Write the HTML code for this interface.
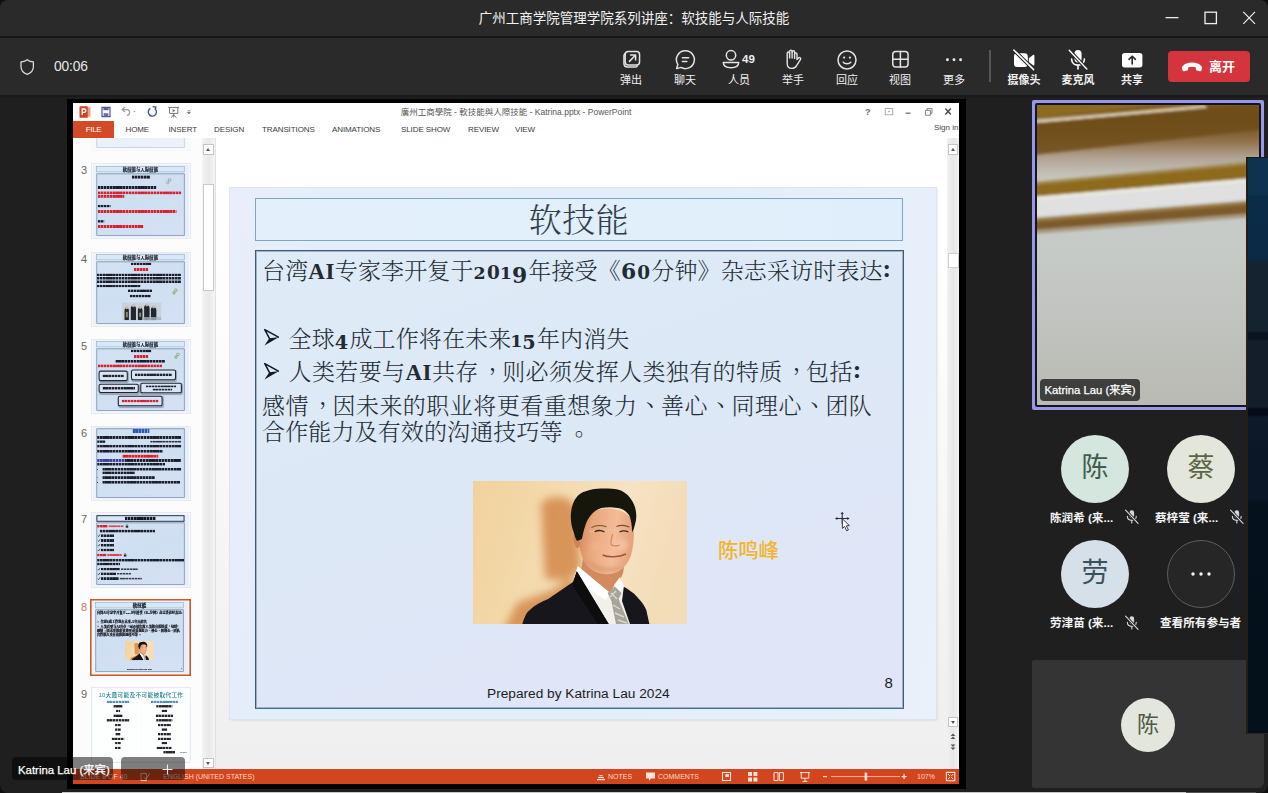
<!DOCTYPE html>
<html lang="zh-CN">
<head>
<meta charset="utf-8">
<title>广州工商学院管理学院系列讲座：软技能与人际技能</title>
<style>
*{box-sizing:border-box;margin:0;padding:0}
html{width:1268px;height:793px;overflow:hidden;background:#0e0e0e}
body{width:1268px;height:793px;overflow:hidden;background:#1f1f1f;border-radius:8px}
body{position:relative;font-family:"Liberation Sans","Noto Sans CJK SC",sans-serif;color:#fff}
.abs{position:absolute}
/* ---------- Teams chrome ---------- */
#titlebar{left:0;top:0;width:1268px;height:36px;background:#2a2a2a}
#titlebar .t{left:0;top:0;width:1268px;height:36px;line-height:37px;text-align:center;font-size:13.5px;color:#f2f2f2}
#sep1{left:0;top:36px;width:1268px;height:2px;background:#171717}
#toolbar{left:0;top:38px;width:1268px;height:57px;background:#2a2a2a}
#toolbar-shadow{left:0;top:95px;width:1268px;height:4px;background:linear-gradient(#181818,#1f1f1f)}
.timer{left:54px;top:58.7px;font-size:13.8px;letter-spacing:-0.15px;color:#e6e6e6;line-height:16px}
.tb{position:absolute;top:38px;width:54px;height:57px;text-align:center}
.tb svg{position:absolute;left:50%;top:10px;margin-left:-12px;width:24px;height:24px;overflow:visible}
.tb .l{position:absolute;left:-10px;right:-10px;top:35px;font-size:11px;line-height:14px;color:#f0f0f0}
.tb.b .l{font-weight:700}
#leave{left:1168px;top:51px;width:82px;height:31px;background:#d4343b;border-radius:4px}
#leave .l{left:41px;top:0;line-height:31px;font-size:13px;font-weight:700;color:#fff}
/* ---------- PowerPoint window ---------- */
#pptframe{left:67px;top:99px;width:899px;height:690px;background:#000}
#ppt{left:73px;top:103px;width:886px;height:681px;background:#fff;overflow:hidden;color:#444}

/* ppt chrome (coordinates relative to #ppt at 73,103) */
#ppt .qat{left:0;top:0;width:886px;height:18px}
#ppt .ptitle{left:0;top:3px;width:886px;text-align:center;font-size:8.5px;line-height:12px;color:#555;letter-spacing:0;white-space:nowrap;font-family:"Liberation Sans","Noto Sans CJK TC",sans-serif}
#ppt .tabs{left:0;top:18px;width:886px;height:17px;font-size:8px;line-height:17px;color:#444;white-space:nowrap}
#ppt .tabs span{position:absolute;top:0;letter-spacing:-0.1px;color:#3a3a3a}
#ppt .file{left:0;top:18px;width:41px;height:17px;background:#d54a26;color:#fff;text-align:center;font-size:8px;line-height:17px;letter-spacing:-0.4px}
#ppt .signin{left:861px;top:19px;font-size:8px;line-height:12px;color:#444;white-space:nowrap}
#thumbs{left:0;top:35px;width:129px;height:632px;background:#fcfcfc;overflow:hidden}
#thumbs .n{position:absolute;left:8px;font-size:11px;line-height:12px;color:#666}
#tscroll{left:129px;top:35px;width:13px;height:632px;background:linear-gradient(90deg,#f3f3f3,#e9e9e9 50%,#f3f3f3)}
#edit{left:143px;top:35px;width:731px;height:632px;background:linear-gradient(#ffffff 0%,#fdfdfd 30%,#f3f3f3 75%,#efefef 100%)}
#rscroll{left:874px;top:35px;width:12px;height:632px;background:linear-gradient(90deg,#f1f1f1,#e7e7e7 50%,#f1f1f1)}
.sbtn{position:absolute;background:#fff;border:1px solid #c6c6c6}
.sbtn:after{content:"";position:absolute;left:50%;top:50%;margin:-1.5px 0 0 -2.5px;border:2.5px solid transparent;border-top:none;border-bottom:3px solid #555}
.sbtn.d:after{border-bottom:none;border-top:3px solid #555}
#status{left:0;top:666px;width:886px;height:15px;background:#d2461f;color:#ffd9c8;font-size:7px;line-height:15px;white-space:nowrap}
#status span{position:absolute;top:0}

/* slide (706x531 design space) */
.sl{position:absolute;width:706px;height:531px;background:linear-gradient(100deg,#e9eefa 0%,#e3eefa 14%,#e2eefa 60%,#e8f0fa 94%,#ebf1fb 100%);font-family:"Liberation Serif","Noto Serif CJK SC",serif;color:#222b33;overflow:hidden}
.sl .tbox{position:absolute;left:25px;top:10px;width:648px;height:43px;border:1px solid #7da6c4;background:linear-gradient(90deg,#e3f0fb,#dfeefa);text-align:center;font-size:33px;line-height:45px;color:#333d4b;letter-spacing:0.5px;font-weight:300}
.sl .cbox{position:absolute;left:25px;top:62px;width:649px;height:459px;border:1px solid #3f5a73;box-shadow:0 0 0 1px rgba(63,90,115,.38) inset;border-bottom-color:#3d6f8f;background:linear-gradient(160deg,#dfebf7 0%,#dde8f6 45%,#e0e5f8 100%)}
.sl .ln{position:absolute;margin:1px 0 0 1px;left:5px;white-space:nowrap;font-size:23px;line-height:28px;letter-spacing:0.13px;font-weight:300}
.sl .ln b{font-weight:700}
.sl .bu{display:inline-block;width:26.5px;vertical-align:top;height:28px}
.sl .bu svg{width:15px;height:17px;margin:3.6px 0 0 2.2px;display:block}
.sl .ln b{letter-spacing:0.5px}
.sl .ln b.d{font-family:"DejaVu Serif","Liberation Serif",serif;letter-spacing:1.2px;font-weight:700}
.sl .d .x{font-size:0.76em}
.sl .d .x0{font-size:0.8em}
.sl .d .x1{font-size:0.76em;margin:0 -1.2px}
.sl .d .y{font-size:0.84em;position:relative;top:0.11em}
.sl .d .y9{font-size:0.95em;position:relative;top:0.2em}
.sl .d .z{font-size:0.95em}
.sl .pc{display:inline-block;position:relative;left:0.44em;top:-0.45em}
.sl .pc.p2{left:0.37em;top:-0.35em}
.sl .pc.p3{left:0.52em;top:-0.22em}
.sl .co{font-family:"Liberation Serif",serif;font-weight:700;letter-spacing:2px;font-size:1.12em;position:relative;top:-2.2px;line-height:1px}
.sl .nm{position:absolute;left:488px;top:350px;font-family:"Liberation Sans","Noto Sans CJK SC",sans-serif;font-size:20.5px;line-height:26px;color:#f2b52c;font-weight:500;letter-spacing:-0.3px}
.sl .ft{position:absolute;left:257px;top:497px;font-family:"Liberation Sans",sans-serif;font-size:13.7px;line-height:18px;color:#1c1c1c;white-space:nowrap}
.sl .pg{position:absolute;left:654.5px;top:486px;font-family:"Liberation Sans",sans-serif;font-size:15px;line-height:18px;color:#1c1c1c}
.sl .ph{position:absolute;left:243px;top:293px;width:214px;height:143px}

/* right panel */
#vtile{left:1032px;top:100px;width:232px;height:310px;background:#9997e8;border-radius:2px}
#vtile .in{position:absolute;left:3px;top:3px;right:3px;bottom:3px;background:#15151f;border-radius:2px}
#vtile svg{position:absolute;left:5px;top:5px;width:222px;height:300px}
.nlabel{-webkit-text-stroke:0.25px #fff;position:absolute;background:rgba(44,44,44,.88);border-radius:4px;color:#fff;font-size:12px;line-height:22px;text-align:center;white-space:nowrap}
.av{position:absolute;width:68px;height:68px;border-radius:50%;text-align:center;font-size:27px;line-height:66px;font-weight:400}
.pl{position:absolute;font-size:11.6px;font-weight:700;line-height:14px;color:#f4f4f4;white-space:nowrap}
.pm{position:absolute;width:15.6px;height:15.6px;overflow:visible;margin:-1px 0 0 -1px}
#btile{left:1032px;top:660px;width:232px;height:128px;background:#343434;border-radius:2px 2px 6px 2px}
#navy{left:1246px;top:157px;width:22px;height:577px;background:linear-gradient(#0e3350 0,#0e3350 36px,#0b2c48 38px,#0a2a46 100px,#15222f 108px,#15222f 173px,#0a1420 175px,#0a1420 181px,#141d2a 183px,#141d2a 249px,#060d18 251px,#060d18 257px,#0e1a2a 259px,#0b1726 300px,#0b1726 340px,#05111c 346px,#04101a 100%);border-left:2px solid #231f17;border-top:1.5px solid #1a1814;border-bottom:1.5px solid #2a261c}

/* thumbnails */
#thumbs .th{position:absolute;left:18px;width:99.5px;height:75.6px;background:#f6f9fd;box-shadow:0 0 0 1px #e6eaef inset}
#thumbs .th.sel{left:17.2px;width:100.6px;height:77px;margin-top:-0.6px;background:#fbf3ee;box-shadow:0 0 0 1.6px #c45a2e inset}
#thumbs .th .sl{left:1.7px;top:1.5px;transform:scale(0.136);transform-origin:0 0}
#thumbs .th.sel .sl{left:2.3px;top:2.2px}
#thumbs .sl i{position:absolute;display:block}
#thumbs .sl i.b{-webkit-mask-image:repeating-linear-gradient(90deg,#000 0,#000 16px,rgba(0,0,0,.45) 18px,rgba(0,0,0,.45) 21px,#000 23px);mask-image:repeating-linear-gradient(90deg,#000 0,#000 16px,rgba(0,0,0,.45) 18px,rgba(0,0,0,.45) 21px,#000 23px)}
#thumbs .sl{background:linear-gradient(100deg,#eef3fb,#e6f0fa 40%,#e9eefb)}
#thumbs .sl .cbox{background:linear-gradient(160deg,#d2e2f3 0%,#cfdff2 50%,#d6e0f4 100%);border-color:#6c88a6;border-width:5px}
#thumbs .sl .tbox{background:#d9e8f7;border-width:4px;border-color:#8aa9c4}
#thumbs .th.t2w:after{content:"";position:absolute;left:0;top:0;right:0;bottom:0;background:rgba(255,255,255,.55)}
#thumbs .sl .tt{position:absolute;white-space:nowrap}
#thumbs .n.sel{color:#c47a5e}
#thumbs .sl .ln,#thumbs .sl .tbox{font-weight:900;-webkit-text-stroke:1.6px #1a1d26;color:#1a1d26}
#thumbs .sl .ft{-webkit-text-stroke:1px #333}
</style>
</head>
<body>
<!-- Teams title bar -->
<div id="titlebar" class="abs"><div class="t abs">广州工商学院管理学院系列讲座：软技能与人际技能</div></div>
<div id="sep1" class="abs"></div>
<div id="toolbar" class="abs"></div>
<div id="toolbar-shadow" class="abs"></div>
<div class="timer abs">00:06</div>


<!-- shield + window controls -->
<svg class="abs" style="left:19px;top:58px;width:16.4px;height:18.2px;overflow:visible" viewBox="0 0 18 20"><path d="M9 1.8 C6.8 3.5 4.4 4.1 2.2 4.2 V9.6 C2.2 13.6 4.9 16.4 9 17.9 C13.1 16.4 15.8 13.6 15.8 9.6 V4.2 C13.6 4.1 11.2 3.5 9 1.8 Z" fill="none" stroke="#dcdcdc" stroke-width="1.4" stroke-linejoin="round"/></svg>
<svg class="abs" style="left:1160px;top:6px;width:100px;height:24px;overflow:visible" viewBox="0 0 100 24">
 <path d="M5.5 11.7 H18.5" stroke="#eee" stroke-width="1.2" fill="none"/>
 <rect x="45" y="6.2" width="11.4" height="11.4" fill="none" stroke="#eee" stroke-width="1.3"/>
 <path d="M83.3 5.8 L95 17.8 M95 5.8 L83.3 17.8" stroke="#eee" stroke-width="1.2" fill="none"/>
</svg>

<!-- toolbar buttons -->
<div class="tb" style="left:604px"><svg viewBox="0 0 24 24" fill="none" stroke="#e4e4e4" stroke-width="1.5" stroke-linecap="round" stroke-linejoin="round"><rect x="6.2" y="3.45" width="14.35" height="13.6" rx="3"/><path d="M10.4 13.4 L16.4 7.3 M11.6 7.1 H16.6 V12"/><path d="M6 5.6 C5.3 6.2 4.95 7 4.95 8 V15.6 C4.95 17.7 6.4 19.05 8.5 19.05 H16 C17.1 19.05 17.9 18.6 18.4 17.8"/></svg><div class="l">弹出</div></div>
<div class="tb" style="left:658px"><svg viewBox="0 0 24 24" fill="none" stroke="#e4e4e4" stroke-width="1.5" stroke-linecap="round" stroke-linejoin="round"><path d="M12.4 2.8 A8.9 8.9 0 1 1 8 19.4 L3.6 20.6 L4.9 16.6 A8.9 8.9 0 0 1 12.4 2.8 Z"/><path d="M9.4 9.8 H15.6 M9.4 13.4 H13.8"/></svg><div class="l">聊天</div></div>
<div class="tb" style="left:712px"><svg style="margin-left:-20px;top:9px" viewBox="0 0 24 24" fill="none" stroke="#e4e4e4" stroke-width="1.5" stroke-linecap="round" stroke-linejoin="round"><circle cx="12" cy="8.3" r="4.7"/><path d="M4.3 15.6 H19.7 C19.7 19.4 16.4 20.8 12 20.8 C7.6 20.8 4.3 19.4 4.3 15.6 Z"/></svg><div class="abs" style="left:30px;top:14px;font-size:11.5px;font-weight:700;line-height:14px;color:#ececec">49</div><div class="l">人员</div></div>
<div class="tb" style="left:766px"><svg style="margin-left:-13px;top:9px" viewBox="0 0 24 24" fill="none" stroke="#e4e4e4" stroke-width="1.4" stroke-linecap="round" stroke-linejoin="round"><path d="M7.2 13.2 V6.4 C7.2 4.6 9.6 4.6 9.6 6.4 V4.6 C9.6 2.6 12.1 2.6 12.1 4.6 V5 C12.1 3.3 14.6 3.3 14.6 5.2 V7 C14.6 5.4 17 5.4 17 7.2 V12.6 L18.4 11 C19.6 9.7 21.4 11 20.4 12.6 L16.6 18.6 C15.6 20.4 14.2 21.4 12 21.4 C8.8 21.4 7.2 19.4 7.2 16.4 Z"/><path d="M9.6 6.4 V11 M12.1 5 V11 M14.6 7 V11.4"/></svg><div class="l">举手</div></div>
<div class="tb" style="left:820px"><svg viewBox="0 0 24 24" fill="none" stroke="#e4e4e4" stroke-width="1.5" stroke-linecap="round" stroke-linejoin="round"><circle cx="12" cy="12" r="9"/><path d="M8.2 14.2 C9.6 16.4 14.4 16.4 15.8 14.2"/><circle cx="9.1" cy="9.6" r="1.1" fill="#e4e4e4" stroke="none"/><circle cx="14.9" cy="9.6" r="1.1" fill="#e4e4e4" stroke="none"/></svg><div class="l">回应</div></div>
<div class="tb" style="left:873px"><svg viewBox="0 0 24 24" fill="none" stroke="#e4e4e4" stroke-width="1.5" stroke-linecap="round" stroke-linejoin="round"><rect x="4.75" y="3.55" width="15.3" height="15.5" rx="3"/><path d="M12.4 3.55 V19.05 M4.75 11.3 H20.05"/></svg><div class="l">视图</div></div>
<div class="tb" style="left:927px"><svg viewBox="0 0 24 24" fill="#ececec"><circle cx="5.4" cy="11.8" r="1.45"/><circle cx="12" cy="11.8" r="1.45"/><circle cx="18.6" cy="11.8" r="1.45"/></svg><div class="l">更多</div></div>
<div class="abs" style="left:989px;top:50px;width:1.5px;height:32px;background:#555"></div>
<div class="tb b" style="left:997px"><svg viewBox="0 0 24 24"><path d="M5.2 5.2 H12.6 A3.2 3.2 0 0 1 15.8 8.4 V15.8 A3.2 3.2 0 0 1 12.6 19 H5.2 A3.2 3.2 0 0 1 2 15.8 V8.4 A3.2 3.2 0 0 1 5.2 5.2 Z M16.8 10.2 L21 7 C21.7 6.5 22.4 6.9 22.4 7.7 V16.5 C22.4 17.3 21.7 17.7 21 17.2 L16.8 14 Z" fill="#fff"/><path d="M1.8 2 L21.6 21.6" stroke="#2a2a2a" stroke-width="3.6" stroke-linecap="round"/><path d="M1.8 2 L21.6 21.6" stroke="#fff" stroke-width="1.5" stroke-linecap="round"/></svg><div class="l">摄像头</div></div>
<div class="tb b" style="left:1051px"><svg viewBox="0 0 24 24" fill="none"><rect x="8.4" y="2" width="7.2" height="12.4" rx="3.6" fill="#fff"/><path d="M5.6 11 C5.6 19.2 18.4 19.2 18.4 11 M12 17.4 V21" stroke="#fff" stroke-width="1.6" stroke-linecap="round"/><path d="M3.2 2.2 L20.8 21" stroke="#2a2a2a" stroke-width="3.6" stroke-linecap="round"/><path d="M3.2 2.2 L20.8 21" stroke="#fff" stroke-width="1.4" stroke-linecap="round"/></svg><div class="l">麦克风</div></div>
<div class="tb b" style="left:1105px"><svg viewBox="0 0 24 24"><rect x="2" y="5" width="20.4" height="14.4" rx="2.6" fill="#fff"/><path d="M12.2 16 V8.6 M9 11.4 L12.2 8.2 L15.4 11.4" stroke="#2a2a2a" stroke-width="1.6" fill="none" stroke-linecap="round" stroke-linejoin="round"/></svg><div class="l">共享</div></div>
<div id="leave" class="abs"><svg class="abs" style="left:13px;top:8px;width:22px;height:16px;overflow:visible" viewBox="0 0 22 16"><path d="M11 3.6 C6.8 3.6 3.4 4.9 1.7 6.9 C0.9 7.8 0.9 9 1.2 10.2 L1.5 11.3 C1.7 12.1 2.4 12.5 3.2 12.3 L6 11.6 C6.7 11.4 7.1 10.9 7.1 10.2 V8.5 C8.3 8 9.6 7.8 11 7.8 C12.4 7.8 13.7 8 14.9 8.5 V10.2 C14.9 10.9 15.3 11.4 16 11.6 L18.8 12.3 C19.6 12.5 20.3 12.1 20.5 11.3 L20.8 10.2 C21.1 9 21.1 7.8 20.3 6.9 C18.6 4.9 15.2 3.6 11 3.6 Z" fill="#fff"/></svg><div class="l abs">离开</div></div>

<!-- PowerPoint shared window -->
<div id="pptframe" class="abs"></div>
<div id="ppt" class="abs">
 <div class="qat abs">
  <svg class="abs" style="left:5px;top:2px;width:130px;height:14px;overflow:visible" viewBox="0 0 130 14">
   <!-- powerpoint logo -->
   <rect x="6.5" y="2.2" width="6" height="9.6" fill="#e9a08a"/><rect x="1.5" y="1.2" width="8.2" height="11.6" rx="0.6" fill="#d04423"/><path d="M4.2 10 V4 H6 C8.4 4 8.4 7.4 6 7.4 H4.6" fill="none" stroke="#fff" stroke-width="1.3"/>
   <!-- save -->
   <path d="M24 2.4 H32 V11.6 H24 Z" fill="#fff" stroke="#4d4f95" stroke-width="1.2"/><rect x="25.4" y="2.4" width="5.2" height="2.8" fill="#5a5ca6"/><rect x="25.6" y="8.2" width="4.8" height="3.4" fill="#6a6cb0"/>
   <!-- undo -->
   <path d="M44.6 4.6 H49.2 C52.4 4.6 52.4 10.4 49 10.4 M46.8 2.2 L44.2 4.6 L46.8 7" fill="none" stroke="#9aa0a8" stroke-width="1.3"/><path d="M55.4 6.6 h2" stroke="#aaa" stroke-width="1"/>
   <!-- redo -->
   <path d="M77.4 4.2 A4.1 4.1 0 1 1 72.4 3.4 M74.6 1.6 L77.8 2 L77.2 5.2" fill="none" stroke="#3b5a8c" stroke-width="1.4"/>
   <!-- present from beginning -->
   <path d="M90.4 2.4 H101 M91.6 2.4 V8.4 H99.8 V2.4 M95.7 8.4 V12.4 M93 12.6 L95.7 10 L98.4 12.6" fill="none" stroke="#777" stroke-width="1"/><path d="M94.6 4 L97.4 5.6 L94.6 7.2 Z" fill="#777"/>
   <!-- customize -->
   <path d="M109.4 7.2 h3 l-1.5 1.8 z M109.6 5.6 h2.6" fill="#666" stroke="#666" stroke-width="0.6"/>
  </svg>
  <div class="ptitle abs">廣州工商學院 - 軟技能與人際技能 - Katrina.pptx - PowerPoint</div>
  <svg class="abs" style="left:786px;top:2px;width:96px;height:14px;overflow:visible" viewBox="0 0 96 14">
   <text x="6" y="10.4" font-size="9" font-weight="700" fill="#666" font-family="Liberation Sans, sans-serif">?</text>
   <rect x="26.2" y="3.6" width="7.6" height="6.2" fill="none" stroke="#999" stroke-width="0.8"/><path d="M29 6 h2 l-1 1.4 z" fill="#888"/>
   <path d="M46.6 8.2 h5" stroke="#666" stroke-width="1.2"/>
   <path d="M66.4 5.4 h5 v4.8 h-5 z M68 5.2 v-1.6 h5 v4.8 h-1.6" fill="none" stroke="#777" stroke-width="0.9"/>
   <path d="M86.4 3.6 L91.8 9.4 M91.8 3.6 L86.4 9.4" stroke="#444" stroke-width="1.4"/>
  </svg>
 </div>
 <div class="file abs">FILE</div>
 <div class="tabs abs"><span style="left:52.5px">HOME</span><span style="left:95.5px">INSERT</span><span style="left:141px">DESIGN</span><span style="left:189px">TRANSITIONS</span><span style="left:259px">ANIMATIONS</span><span style="left:328px">SLIDE SHOW</span><span style="left:395px">REVIEW</span><span style="left:442px">VIEW</span></div>
 <div class="signin abs">Sign in</div>

 <div id="thumbs" class="abs"><!--THUMBS-->
<div class="th t2w" style="top:-62.5px"><div class="sl t2"><div class="tbox" style="font-size:32px;line-height:42px;font-weight:700">软技能与人际技能</div><div class="cbox"></div><i class="b" style="left:258px;top:507px;width:184px;height:4px;background:#6a7a8a;opacity:1"></i></div></div>
<div class="n" style="top:26.0px">3</div>
<div class="th" style="top:25.0px"><div class="sl t3"><div class="tbox" style="font-size:32px;line-height:42px;font-weight:700">软技能与人际技能</div><div class="cbox"></div><i class="b" style="left:284px;top:76px;width:138px;height:26px;background:#1b1d2a;opacity:1"></i><svg style="position:absolute;left:529px;top:94px;width:60px;height:64px" viewBox="0 0 60 64"><circle cx="34" cy="16" r="10" fill="none" stroke="#9a9a92" stroke-width="6"/><circle cx="20" cy="36" r="9" fill="none" stroke="#9a9a92" stroke-width="6"/><path d="M30 24 L24 30" stroke="#9a9a92" stroke-width="6"/></svg><i class="b" style="left:34px;top:154px;width:434px;height:23px;background:#1b1d2a;opacity:1"></i><i class="b" style="left:34px;top:193px;width:617px;height:24px;background:#d6222e;opacity:1"></i><i class="b" style="left:34px;top:219px;width:199px;height:23px;background:#d6222e;opacity:1"></i><i class="b" style="left:34px;top:293px;width:97px;height:20px;background:#1b1d2a;opacity:1"></i><i class="b" style="left:34px;top:330px;width:582px;height:25px;background:#d6222e;opacity:1"></i><i class="b" style="left:34px;top:405px;width:51px;height:20px;background:#1b1d2a;opacity:1"></i><i class="b" style="left:34px;top:440px;width:337px;height:25px;background:#d6222e;opacity:1"></i><i class="b" style="left:258px;top:506px;width:184px;height:4px;background:#7a8a9a;opacity:1"></i></div></div>
<div class="n" style="top:114.5px">4</div>
<div class="th" style="top:113.5px"><div class="sl t4"><div class="tbox" style="font-size:32px;line-height:42px;font-weight:700">软技能与人际技能</div><div class="cbox"></div><i class="b" style="left:277px;top:70px;width:153px;height:20px;background:#1b1d2a;opacity:1"></i><i class="b" style="left:299px;top:108px;width:109px;height:26px;background:#d6222e;opacity:1"></i><i class="b" style="left:29px;top:150px;width:618px;height:20px;background:#1b1d2a;opacity:1"></i><i class="b" style="left:29px;top:176px;width:618px;height:21px;background:#1b1d2a;opacity:1"></i><i class="b" style="left:29px;top:200px;width:618px;height:22px;background:#1b1d2a;opacity:1"></i><i class="b" style="left:29px;top:233px;width:322px;height:20px;background:#1b1d2a;opacity:1"></i><i class="b" style="left:256px;top:267px;width:178px;height:20px;background:#1b1d2a;opacity:1"></i><i class="b" style="left:269px;top:306px;width:156px;height:22px;background:#1b1d2a;opacity:1"></i><svg style="position:absolute;left:575px;top:258px;width:60px;height:64px" viewBox="0 0 60 64"><circle cx="34" cy="16" r="10" fill="none" stroke="#8aa060" stroke-width="6"/><circle cx="20" cy="36" r="9" fill="none" stroke="#8aa060" stroke-width="6"/><path d="M30 24 L24 30" stroke="#8aa060" stroke-width="6"/></svg><svg style="position:absolute;left:212px;top:363px;width:292px;height:131px" viewBox="0 0 292 131"><rect width="292" height="131" fill="#c9d2dc"/><g fill="#23262e"><path d="M20 131 V60 C20 30 50 30 52 60 V131 Z"/><path d="M66 131 V40 C70 14 100 14 104 44 V131 Z"/><path d="M118 131 V56 C120 28 150 28 152 58 V131 Z"/><path d="M164 131 V36 C168 10 200 12 204 42 V131 Z"/><path d="M214 131 V50 C218 24 250 26 254 56 V131 Z"/></g><g fill="#8c8f5a"><rect x="30" y="70" width="14" height="40"/><rect x="128" y="76" width="14" height="30"/></g><g fill="#c9b6a0"><circle cx="36" cy="40" r="11"/><circle cx="85" cy="24" r="11"/><circle cx="135" cy="38" r="11"/><circle cx="184" cy="20" r="11"/><circle cx="234" cy="34" r="11"/></g><rect x="150" y="108" width="140" height="23" fill="#aab3bd" opacity=".8"/></svg></div></div>
<div class="n" style="top:201.5px">5</div>
<div class="th" style="top:200.5px"><div class="sl t5"><div class="tbox" style="font-size:32px;line-height:42px;font-weight:700">软技能与人际技能</div><div class="cbox"></div><i class="b" style="left:277px;top:70px;width:153px;height:22px;background:#1b1d2a;opacity:1"></i><i class="b" style="left:299px;top:109px;width:109px;height:26px;background:#d6222e;opacity:1"></i><i class="b" style="left:164px;top:147px;width:366px;height:21px;background:#1b1d2a;opacity:1"></i><i class="b" style="left:34px;top:179px;width:474px;height:24px;background:#d6222e;opacity:1"></i><svg style="position:absolute;left:590px;top:90px;width:60px;height:64px" viewBox="0 0 60 64"><circle cx="34" cy="16" r="10" fill="none" stroke="#8aa060" stroke-width="6"/><circle cx="20" cy="36" r="9" fill="none" stroke="#8aa060" stroke-width="6"/><path d="M30 24 L24 30" stroke="#8aa060" stroke-width="6"/></svg><i style="left:41px;top:225px;width:215px;height:78px;border:8px solid #20242e;border-radius:16px;background:#d9e5f4;box-shadow:4px 8px 6px rgba(40,60,90,.35)"></i><i class="b" style="left:69px;top:253px;width:159px;height:22px;background:#20222e;opacity:1"></i><i style="left:279px;top:216px;width:332px;height:80px;border:8px solid #20242e;border-radius:16px;background:#d9e5f4;box-shadow:4px 8px 6px rgba(40,60,90,.35)"></i><i class="b" style="left:307px;top:245px;width:276px;height:22px;background:#20222e;opacity:1"></i><i style="left:41px;top:321px;width:296px;height:69px;border:8px solid #20242e;border-radius:16px;background:#d9e5f4;box-shadow:4px 8px 6px rgba(40,60,90,.35)"></i><i class="b" style="left:69px;top:344px;width:240px;height:22px;background:#20222e;opacity:1"></i><i style="left:347px;top:314px;width:307px;height:78px;border:8px solid #20242e;border-radius:16px;background:#d9e5f4;box-shadow:4px 8px 6px rgba(40,60,90,.35)"></i><i class="b" style="left:387px;top:333px;width:227px;height:17px;background:#20222e;opacity:1"></i><i class="b" style="left:437px;top:356px;width:147px;height:17px;background:#20222e;opacity:1"></i><i style="left:182px;top:410px;width:330px;height:78px;border:8px solid #20242e;border-radius:16px;background:#d9e5f4;box-shadow:4px 8px 6px rgba(40,60,90,.35)"></i><i class="b" style="left:210px;top:438px;width:274px;height:22px;background:#d6222e;opacity:1"></i><i class="b" style="left:258px;top:506px;width:184px;height:4px;background:#7a8a9a;opacity:1"></i></div></div>
<div class="n" style="top:288.6px">6</div>
<div class="th" style="top:287.6px"><div class="sl t6"><div class="cbox" style="top:10px;height:511px"></div><i class="b" style="left:290px;top:14px;width:127px;height:32px;background:#2f55b4;opacity:1"></i><i class="b" style="left:30px;top:66px;width:620px;height:22px;background:#1b1d2a;opacity:1"></i><i class="b" style="left:30px;top:97px;width:62px;height:20px;background:#1b1d2a;opacity:1"></i><i class="b" style="left:420px;top:100px;width:230px;height:16px;background:#2b2d38;opacity:1"></i><i class="b" style="left:30px;top:130px;width:620px;height:22px;background:#1b1d2a;opacity:1"></i><i class="b" style="left:30px;top:167px;width:487px;height:23px;background:#1b1d2a;opacity:1"></i><i class="b" style="left:210px;top:200px;width:278px;height:30px;background:#f3b4c4;opacity:1"></i><i class="b" style="left:216px;top:203px;width:266px;height:24px;background:#d6222e;opacity:1"></i><i class="b" style="left:30px;top:235px;width:200px;height:22px;background:#3a3f9a;opacity:1"></i><i class="b" style="left:230px;top:235px;width:420px;height:22px;background:#1b1d2a;opacity:1"></i><i class="b" style="left:30px;top:263px;width:500px;height:22px;background:#1b1d2a;opacity:1"></i><i class="b" style="left:30px;top:308px;width:8px;height:8px;background:#1b1d2a;opacity:1"></i><i class="b" style="left:68px;top:300px;width:582px;height:22px;background:#1b1d2a;opacity:1"></i><i class="b" style="left:68px;top:326px;width:240px;height:22px;background:#1b1d2a;opacity:1"></i><i class="b" style="left:30px;top:369px;width:8px;height:8px;background:#1b1d2a;opacity:1"></i><i class="b" style="left:68px;top:361px;width:387px;height:22px;background:#1b1d2a;opacity:1"></i><i class="b" style="left:30px;top:404px;width:8px;height:8px;background:#1b1d2a;opacity:1"></i><i class="b" style="left:68px;top:396px;width:572px;height:22px;background:#1b1d2a;opacity:1"></i><i class="b" style="left:260px;top:499px;width:180px;height:3px;background:#5a6a7a;opacity:1"></i></div></div>
<div class="n" style="top:375.3px">7</div>
<div class="th" style="top:374.3px"><div class="sl t7"><div class="tbox" style="border:7px solid #1f2b45;top:9px;height:48px"></div><div class="cbox" style="top:62px;height:459px"></div><i class="b" style="left:234px;top:19px;width:230px;height:26px;background:#15161e;opacity:1"></i><i class="b" style="left:30px;top:80px;width:78px;height:21px;background:#d6222e;opacity:1"></i><i class="b" style="left:112px;top:82px;width:118px;height:17px;background:#e0404a;opacity:1"></i><svg style="position:absolute;left:238px;top:76px;width:24px;height:26px" viewBox="0 0 24 26"><rect x="2" y="11" width="20" height="15" fill="#222"/><path d="M6 11 V7 C6 0 18 0 18 7 V11" stroke="#222" stroke-width="4" fill="none"/></svg><i class="b" style="left:51px;top:114px;width:405px;height:23px;background:#1b1d2a;opacity:1"></i><svg style="position:absolute;left:32px;top:146px;width:24px;height:24px" viewBox="0 0 24 24"><path d="M3 13 L9 20 L21 3" stroke="#111" stroke-width="5" fill="none"/></svg><i class="b" style="left:58px;top:148px;width:97px;height:22px;background:#1b1d2a;opacity:1"></i><svg style="position:absolute;left:32px;top:182px;width:24px;height:24px" viewBox="0 0 24 24"><path d="M3 13 L9 20 L21 3" stroke="#111" stroke-width="5" fill="none"/></svg><i class="b" style="left:58px;top:184px;width:97px;height:22px;background:#1b1d2a;opacity:1"></i><svg style="position:absolute;left:32px;top:217px;width:24px;height:24px" viewBox="0 0 24 24"><path d="M3 13 L9 20 L21 3" stroke="#111" stroke-width="5" fill="none"/></svg><i class="b" style="left:58px;top:219px;width:97px;height:22px;background:#1b1d2a;opacity:1"></i><svg style="position:absolute;left:32px;top:252px;width:24px;height:24px" viewBox="0 0 24 24"><path d="M3 13 L9 20 L21 3" stroke="#111" stroke-width="5" fill="none"/></svg><i class="b" style="left:58px;top:254px;width:97px;height:22px;background:#1b1d2a;opacity:1"></i><i class="b" style="left:30px;top:291px;width:70px;height:22px;background:#d6222e;opacity:1"></i><i class="b" style="left:104px;top:293px;width:108px;height:18px;background:#e0404a;opacity:1"></i><svg style="position:absolute;left:224px;top:288px;width:24px;height:26px" viewBox="0 0 24 26"><rect x="2" y="11" width="20" height="15" fill="#222"/><path d="M6 11 V7 C6 0 18 0 18 7 V11" stroke="#222" stroke-width="4" fill="none"/></svg><i class="b" style="left:30px;top:329px;width:642px;height:22px;background:#1b1d2a;opacity:1"></i><i class="b" style="left:30px;top:357px;width:170px;height:22px;background:#1b1d2a;opacity:1"></i><svg style="position:absolute;left:32px;top:393px;width:24px;height:24px" viewBox="0 0 24 24"><path d="M3 13 L9 20 L21 3" stroke="#111" stroke-width="5" fill="none"/></svg><i class="b" style="left:58px;top:395px;width:142px;height:21px;background:#1b1d2a;opacity:1"></i><i class="b" style="left:204px;top:398px;width:126px;height:15px;background:#3a3d48;opacity:1"></i><svg style="position:absolute;left:32px;top:427px;width:24px;height:24px" viewBox="0 0 24 24"><path d="M3 13 L9 20 L21 3" stroke="#111" stroke-width="5" fill="none"/></svg><i class="b" style="left:58px;top:429px;width:112px;height:21px;background:#1b1d2a;opacity:1"></i><i class="b" style="left:174px;top:432px;width:106px;height:15px;background:#3a3d48;opacity:1"></i><svg style="position:absolute;left:32px;top:462px;width:24px;height:24px" viewBox="0 0 24 24"><path d="M3 13 L9 20 L21 3" stroke="#111" stroke-width="5" fill="none"/></svg><i class="b" style="left:58px;top:464px;width:132px;height:22px;background:#1b1d2a;opacity:1"></i><i class="b" style="left:194px;top:467px;width:166px;height:16px;background:#3a3d48;opacity:1"></i><i class="b" style="left:270px;top:492px;width:190px;height:3px;background:#5a6a7a;opacity:1"></i></div></div>
<div class="n sel" style="top:462.5px">8</div>
<div class="th sel" style="top:461.5px"><div class="sl t8"><div class="tbox">软技能</div>
 <div class="cbox">
  <div class="ln" style="top:5px">台湾<b>AI</b>专家李开复于<b class="d"><span class="x">2</span><span class="x0">0</span><span class="x1">1</span><span class="y9">9</span></b>年接受《<b class="d"><span class="z">6</span><span class="x0">0</span></b>分钟》杂志采访时表达<span class="co">:</span></div>
  <div class="ln" style="top:73px"><span class="bu"><svg viewBox="0 0 15 17"><path d="M5.3 9.2 L14.6 8.2 L0.5 16.6 Z" fill="#14181f"/><path d="M0.7 0.6 L14.4 8.2 M0.9 0.8 L5.4 9.3" stroke="#14181f" stroke-width="1.5" fill="none" stroke-linecap="round"/></svg></span>全球<b class="d"><span class="y">4</span></b>成工作将在未来<b class="d"><span class="x1">1</span><span class="y">5</span></b>年内消失</div>
  <div class="ln" style="top:107px;letter-spacing:0.38px"><span class="bu"><svg viewBox="0 0 15 17"><path d="M5.3 9.2 L14.6 8.2 L0.5 16.6 Z" fill="#14181f"/><path d="M0.7 0.6 L14.4 8.2 M0.9 0.8 L5.4 9.3" stroke="#14181f" stroke-width="1.5" fill="none" stroke-linecap="round"/></svg></span>人类若要与<b>AI</b>共存<span class="pc">，</span>则必须发挥人类独有的特质<span class="pc">，</span>包括<span class="co">:</span></div>
  <div class="ln" style="top:141px;letter-spacing:0.47px">感情<span class="pc">，</span>因未来的职业将更看重想象力<span class="pc p2">、</span>善心<span class="pc p2">、</span>同理心<span class="pc p2">、</span>团队</div>
  <div class="ln" style="top:167px">合作能力及有效的沟通技巧等<span class="pc p3">。</span></div>
 </div>
 <svg class="ph" viewBox="0 0 214 143" preserveAspectRatio="none">
 <defs>
  <linearGradient id="pbg2" x1="0" y1="0" x2="1" y2="0.2"><stop offset="0" stop-color="#f0d29d"/><stop offset="0.3" stop-color="#f3d8a8"/><stop offset="0.72" stop-color="#f6e3c3"/><stop offset="1" stop-color="#f3dcb8"/></linearGradient>
  <filter id="b62" x="-30%" y="-30%" width="160%" height="160%"><feGaussianBlur stdDeviation="4.5"/></filter>
  <filter id="b12" x="-10%" y="-10%" width="120%" height="120%"><feGaussianBlur stdDeviation="0.7"/></filter>
  <filter id="b22" x="-20%" y="-20%" width="140%" height="140%"><feGaussianBlur stdDeviation="2"/></filter>
  <linearGradient id="skin2" x1="0" y1="0" x2="1" y2="0.15"><stop offset="0" stop-color="#cf8556"/><stop offset="0.28" stop-color="#e8a67b"/><stop offset="0.7" stop-color="#f3bd98"/><stop offset="1" stop-color="#e4a37a"/></linearGradient>
  <clipPath id="pc2"><rect width="214" height="143"/></clipPath>
 </defs>
 <rect width="214" height="143" fill="url(#pbg2)"/>
 <g clip-path="url(#pc2)">
 <g filter="url(#b62)"><path d="M68 22 C80 12 98 14 104 28 L108 90 L82 108 L44 122 L30 150 L96 150 L102 100 L72 98 Z" fill="#d58d50" opacity="0.9"/></g>
 <g filter="url(#b12)">
  <!-- neck + face -->
  <path d="M110 78 L106 100 L140 116 L150 92 L152 80 Z" fill="#d18b5f"/>
  <path d="M106.5 46 C105 58 106 72 112 82 C118 91 128 94 137 93 C146 92 154 86 158 74 C161 64 161.5 52 160 42 C154 22 112 22 106.5 46 Z" fill="url(#skin2)"/>
  <path d="M103 53 C100.4 51.6 99.6 58 102 64.6 C103.6 68.4 107 67.6 107 62 Z" fill="#cf8556"/>
  <g filter="url(#b22)"><path d="M110 76 C118 90 138 95 152 84 C142 90 122 90 110 76 Z" fill="#b96f48" opacity=".7"/><ellipse cx="148" cy="64" rx="7" ry="6" fill="#f7c7a6" opacity=".7"/><ellipse cx="124" cy="66" rx="6" ry="5" fill="#f1b690" opacity=".6"/></g>
  <!-- hair -->
  <path d="M100.8 51.5 C97 42 96.6 30 100.8 20.8 C104 14.6 107.6 12 112 10.6 C117 8.6 122.6 7.8 128.3 7.6 C134 7.4 140 7.6 144.7 8.6 C150 10 154 13 157 16.8 C160.6 21.4 162.4 26 163 31 C163.6 36 163 40 162 43.3 C161.4 46.6 160.4 49 159 51.5 C159 44 158 38 156 34 C153 29.6 149 27.6 144.7 27 C139 26 133.6 26.2 128.3 27 C124 28.4 120.6 30.6 118 34 C115 37.6 113.2 41.4 112 45.4 C110.6 49.6 109.8 53.6 109 57.6 C107.6 59 105.6 59.8 103.8 59.7 C102.4 57 101.4 54.4 100.8 51.5 Z" fill="#17120e"/>
  <!-- brows, glasses, eyes, nose, mouth -->
  <path d="M118.4 46.6 C122.4 44.2 128.4 44 133.4 45.8 M143.4 45.6 C147.4 44 152.4 44.2 156.4 46" stroke="#6a4630" stroke-width="1.1" fill="none" opacity=".9"/>
  <path d="M116.4 50.2 H134.4 M142.4 50.2 H159 M134.4 49.8 C137.4 48.4 139.4 48.4 142.4 49.8" stroke="#dccdb9" stroke-width="0.7" fill="none" opacity=".9"/>
  <path d="M121.6 50.8 C124.6 49.2 128.6 49.2 131.6 51 M146.4 51 C149.4 49.6 152.4 49.6 155.4 51" stroke="#3c271b" stroke-width="1.3" fill="none"/>
  <path d="M139.6 53 C138.6 58 136.6 62 138.6 64 C140.6 65.2 144.6 65.2 146.6 64" stroke="#c4794f" stroke-width="1.1" fill="none" opacity=".8"/>
  <path d="M129.6 74 C135 76.6 146 76.4 153 73" stroke="#a3513f" stroke-width="1.4" fill="none"/>
  <!-- shirt -->
  <path d="M104.8 85.2 L101 99 L134 146 L160 146 L152 108 L142 103 L137 112 Z" fill="#f3f0ea"/>
  <path d="M104.8 85.2 L137 112 L132.4 119 L101 97 Z" fill="#ffffff"/>
  <path d="M147 96 L152 107 L145 112 L141 104 Z" fill="#fbfaf7"/>
  <!-- tie -->
  <path d="M134.6 112 L141.6 105.6 L148.6 112 L145.6 118 L157 146 L143.6 146 L138.4 120 Z" fill="#a7a59a"/>
  <path d="M138 112 L144 118 M140 124 L147 128 M142 132 L151 136 M137 116 L143 110 M145 139 L154 142" stroke="#dad8cd" stroke-width="1.4"/>
  <!-- suit -->
  <path d="M48.6 146 C51 136 54 131 56.8 129 C62 124 68 121 75.2 118 L100 101 L103.8 90.3 L137.5 146 Z" fill="#14131a"/>
  <path d="M150.8 105.7 C158 110 162 113 165 117 C169 121 171.6 125 173.3 129 L177 146 L158 146 L149 120 Z" fill="#14131a"/>
  <path d="M103.8 90.3 L99.6 104 L127 146 L137.5 146 Z" fill="#0b0b0f"/>
 </g>
 </g>
</svg>
 
 <div class="ft">Prepared by Katrina Lau 2024</div>
 <div class="pg">8</div></div></div>
<div class="n" style="top:550.0px">9</div>
<div class="th" style="top:549.0px"><div class="sl t9"><i style="left:0;top:0;width:706px;height:531px;background:#fdfefe"></i><div class="tt" style="left:20px;top:20px;width:666px;font-size:42px;line-height:50px;color:#1d7f93;text-align:center;letter-spacing:2px;font-family:'Liberation Sans','Noto Sans CJK SC',sans-serif;font-weight:500">10大最可能及不可能被取代工作</div><i class="b" style="left:99px;top:84px;width:170px;height:20px;background:#4f93b8;opacity:1"></i><i class="b" style="left:425px;top:84px;width:200px;height:20px;background:#4f93b8;opacity:1"></i><i class="b" style="left:352px;top:76px;width:3px;height:383px;background:#9aa4ac;opacity:1"></i><i class="b" style="left:149px;top:118px;width:70px;height:20px;background:#23252c;opacity:1"></i><i class="b" style="left:464px;top:118px;width:122px;height:20px;background:#23252c;opacity:1"></i><i class="b" style="left:40px;top:143px;width:300px;height:2px;background:#dfe3e6;opacity:1"></i><i class="b" style="left:366px;top:143px;width:300px;height:2px;background:#dfe3e6;opacity:1"></i><i class="b" style="left:167px;top:151px;width:35px;height:20px;background:#23252c;opacity:1"></i><i class="b" style="left:503px;top:151px;width:44px;height:20px;background:#23252c;opacity:1"></i><i class="b" style="left:40px;top:176px;width:300px;height:2px;background:#dfe3e6;opacity:1"></i><i class="b" style="left:366px;top:176px;width:300px;height:2px;background:#dfe3e6;opacity:1"></i><i class="b" style="left:149px;top:186px;width:70px;height:20px;background:#23252c;opacity:1"></i><i class="b" style="left:460px;top:186px;width:130px;height:20px;background:#23252c;opacity:1"></i><i class="b" style="left:40px;top:211px;width:300px;height:2px;background:#dfe3e6;opacity:1"></i><i class="b" style="left:366px;top:211px;width:300px;height:2px;background:#dfe3e6;opacity:1"></i><i class="b" style="left:99px;top:221px;width:170px;height:20px;background:#23252c;opacity:1"></i><i class="b" style="left:464px;top:221px;width:122px;height:20px;background:#23252c;opacity:1"></i><i class="b" style="left:40px;top:246px;width:300px;height:2px;background:#dfe3e6;opacity:1"></i><i class="b" style="left:366px;top:246px;width:300px;height:2px;background:#dfe3e6;opacity:1"></i><i class="b" style="left:162px;top:256px;width:44px;height:20px;background:#23252c;opacity:1"></i><i class="b" style="left:477px;top:256px;width:96px;height:20px;background:#23252c;opacity:1"></i><i class="b" style="left:40px;top:281px;width:300px;height:2px;background:#dfe3e6;opacity:1"></i><i class="b" style="left:366px;top:281px;width:300px;height:2px;background:#dfe3e6;opacity:1"></i><i class="b" style="left:162px;top:288px;width:44px;height:20px;background:#23252c;opacity:1"></i><i class="b" style="left:503px;top:288px;width:44px;height:20px;background:#23252c;opacity:1"></i><i class="b" style="left:40px;top:313px;width:300px;height:2px;background:#dfe3e6;opacity:1"></i><i class="b" style="left:366px;top:313px;width:300px;height:2px;background:#dfe3e6;opacity:1"></i><i class="b" style="left:164px;top:323px;width:39px;height:20px;background:#23252c;opacity:1"></i><i class="b" style="left:477px;top:323px;width:96px;height:20px;background:#23252c;opacity:1"></i><i class="b" style="left:40px;top:348px;width:300px;height:2px;background:#dfe3e6;opacity:1"></i><i class="b" style="left:366px;top:348px;width:300px;height:2px;background:#dfe3e6;opacity:1"></i><i class="b" style="left:136px;top:356px;width:96px;height:20px;background:#23252c;opacity:1"></i><i class="b" style="left:477px;top:356px;width:96px;height:20px;background:#23252c;opacity:1"></i><i class="b" style="left:40px;top:381px;width:300px;height:2px;background:#dfe3e6;opacity:1"></i><i class="b" style="left:366px;top:381px;width:300px;height:2px;background:#dfe3e6;opacity:1"></i><i class="b" style="left:162px;top:388px;width:44px;height:20px;background:#23252c;opacity:1"></i><i class="b" style="left:503px;top:388px;width:44px;height:20px;background:#23252c;opacity:1"></i><i class="b" style="left:40px;top:413px;width:300px;height:2px;background:#dfe3e6;opacity:1"></i><i class="b" style="left:366px;top:413px;width:300px;height:2px;background:#dfe3e6;opacity:1"></i><i class="b" style="left:160px;top:423px;width:48px;height:20px;background:#23252c;opacity:1"></i><i class="b" style="left:466px;top:423px;width:117px;height:20px;background:#23252c;opacity:1"></i><i class="b" style="left:40px;top:448px;width:300px;height:2px;background:#dfe3e6;opacity:1"></i><i class="b" style="left:366px;top:448px;width:300px;height:2px;background:#dfe3e6;opacity:1"></i><i class="b" style="left:516px;top:456px;width:87px;height:20px;background:#23252c;opacity:1"></i><i class="b" style="left:40px;top:481px;width:300px;height:2px;background:#dfe3e6;opacity:1"></i><i class="b" style="left:366px;top:481px;width:300px;height:2px;background:#dfe3e6;opacity:1"></i><i class="b" style="left:640px;top:462px;width:50px;height:8px;background:#8a8f96;opacity:1"></i></div></div>
<!--/THUMBS--></div>
 <div id="tscroll" class="abs"><div class="sbtn" style="left:1px;top:6px;width:11px;height:11px"></div><div class="abs" style="left:1px;top:46px;width:11px;height:107px;background:#fff;border:1px solid #c9c9c9"></div><div class="sbtn d" style="left:1px;top:620px;width:11px;height:10px"></div></div>
 <div class="abs" style="left:142px;top:35px;width:1px;height:632px;background:#e2e2e2"></div>
 <div id="edit" class="abs"><div class="sl" id="mainslide" style="left:14px;top:50px;box-shadow:0 0 0 1px #e1e4e8,1px 1px 3px rgba(0,0,0,.12)">
 <div class="tbox">软技能</div>
 <div class="cbox">
  <div class="ln" style="top:5px">台湾<b>AI</b>专家李开复于<b class="d"><span class="x">2</span><span class="x0">0</span><span class="x1">1</span><span class="y9">9</span></b>年接受《<b class="d"><span class="z">6</span><span class="x0">0</span></b>分钟》杂志采访时表达<span class="co">:</span></div>
  <div class="ln" style="top:73px"><span class="bu"><svg viewBox="0 0 15 17"><path d="M5.3 9.2 L14.6 8.2 L0.5 16.6 Z" fill="#14181f"/><path d="M0.7 0.6 L14.4 8.2 M0.9 0.8 L5.4 9.3" stroke="#14181f" stroke-width="1.5" fill="none" stroke-linecap="round"/></svg></span>全球<b class="d"><span class="y">4</span></b>成工作将在未来<b class="d"><span class="x1">1</span><span class="y">5</span></b>年内消失</div>
  <div class="ln" style="top:107px;letter-spacing:0.38px"><span class="bu"><svg viewBox="0 0 15 17"><path d="M5.3 9.2 L14.6 8.2 L0.5 16.6 Z" fill="#14181f"/><path d="M0.7 0.6 L14.4 8.2 M0.9 0.8 L5.4 9.3" stroke="#14181f" stroke-width="1.5" fill="none" stroke-linecap="round"/></svg></span>人类若要与<b>AI</b>共存<span class="pc">，</span>则必须发挥人类独有的特质<span class="pc">，</span>包括<span class="co">:</span></div>
  <div class="ln" style="top:141px;letter-spacing:0.47px">感情<span class="pc">，</span>因未来的职业将更看重想象力<span class="pc p2">、</span>善心<span class="pc p2">、</span>同理心<span class="pc p2">、</span>团队</div>
  <div class="ln" style="top:167px">合作能力及有效的沟通技巧等<span class="pc p3">。</span></div>
 </div>
 <svg class="ph" viewBox="0 0 214 143" preserveAspectRatio="none">
 <defs>
  <linearGradient id="pbg" x1="0" y1="0" x2="1" y2="0.2"><stop offset="0" stop-color="#f0d29d"/><stop offset="0.3" stop-color="#f3d8a8"/><stop offset="0.72" stop-color="#f6e3c3"/><stop offset="1" stop-color="#f3dcb8"/></linearGradient>
  <filter id="b6" x="-30%" y="-30%" width="160%" height="160%"><feGaussianBlur stdDeviation="4.5"/></filter>
  <filter id="b1" x="-10%" y="-10%" width="120%" height="120%"><feGaussianBlur stdDeviation="0.7"/></filter>
  <filter id="b2" x="-20%" y="-20%" width="140%" height="140%"><feGaussianBlur stdDeviation="2"/></filter>
  <linearGradient id="skin" x1="0" y1="0" x2="1" y2="0.15"><stop offset="0" stop-color="#cf8556"/><stop offset="0.28" stop-color="#e8a67b"/><stop offset="0.7" stop-color="#f3bd98"/><stop offset="1" stop-color="#e4a37a"/></linearGradient>
  <clipPath id="pc"><rect width="214" height="143"/></clipPath>
 </defs>
 <rect width="214" height="143" fill="url(#pbg)"/>
 <g clip-path="url(#pc)">
 <g filter="url(#b6)"><path d="M68 22 C80 12 98 14 104 28 L108 90 L82 108 L44 122 L30 150 L96 150 L102 100 L72 98 Z" fill="#d58d50" opacity="0.9"/></g>
 <g filter="url(#b1)">
  <!-- neck + face -->
  <path d="M110 78 L106 100 L140 116 L150 92 L152 80 Z" fill="#d18b5f"/>
  <path d="M106.5 46 C105 58 106 72 112 82 C118 91 128 94 137 93 C146 92 154 86 158 74 C161 64 161.5 52 160 42 C154 22 112 22 106.5 46 Z" fill="url(#skin)"/>
  <path d="M103 53 C100.4 51.6 99.6 58 102 64.6 C103.6 68.4 107 67.6 107 62 Z" fill="#cf8556"/>
  <g filter="url(#b2)"><path d="M110 76 C118 90 138 95 152 84 C142 90 122 90 110 76 Z" fill="#b96f48" opacity=".7"/><ellipse cx="148" cy="64" rx="7" ry="6" fill="#f7c7a6" opacity=".7"/><ellipse cx="124" cy="66" rx="6" ry="5" fill="#f1b690" opacity=".6"/></g>
  <!-- hair -->
  <path d="M100.8 51.5 C97 42 96.6 30 100.8 20.8 C104 14.6 107.6 12 112 10.6 C117 8.6 122.6 7.8 128.3 7.6 C134 7.4 140 7.6 144.7 8.6 C150 10 154 13 157 16.8 C160.6 21.4 162.4 26 163 31 C163.6 36 163 40 162 43.3 C161.4 46.6 160.4 49 159 51.5 C159 44 158 38 156 34 C153 29.6 149 27.6 144.7 27 C139 26 133.6 26.2 128.3 27 C124 28.4 120.6 30.6 118 34 C115 37.6 113.2 41.4 112 45.4 C110.6 49.6 109.8 53.6 109 57.6 C107.6 59 105.6 59.8 103.8 59.7 C102.4 57 101.4 54.4 100.8 51.5 Z" fill="#17120e"/>
  <!-- brows, glasses, eyes, nose, mouth -->
  <path d="M118.4 46.6 C122.4 44.2 128.4 44 133.4 45.8 M143.4 45.6 C147.4 44 152.4 44.2 156.4 46" stroke="#6a4630" stroke-width="1.1" fill="none" opacity=".9"/>
  <path d="M116.4 50.2 H134.4 M142.4 50.2 H159 M134.4 49.8 C137.4 48.4 139.4 48.4 142.4 49.8" stroke="#dccdb9" stroke-width="0.7" fill="none" opacity=".9"/>
  <path d="M121.6 50.8 C124.6 49.2 128.6 49.2 131.6 51 M146.4 51 C149.4 49.6 152.4 49.6 155.4 51" stroke="#3c271b" stroke-width="1.3" fill="none"/>
  <path d="M139.6 53 C138.6 58 136.6 62 138.6 64 C140.6 65.2 144.6 65.2 146.6 64" stroke="#c4794f" stroke-width="1.1" fill="none" opacity=".8"/>
  <path d="M129.6 74 C135 76.6 146 76.4 153 73" stroke="#a3513f" stroke-width="1.4" fill="none"/>
  <!-- shirt -->
  <path d="M104.8 85.2 L101 99 L134 146 L160 146 L152 108 L142 103 L137 112 Z" fill="#f3f0ea"/>
  <path d="M104.8 85.2 L137 112 L132.4 119 L101 97 Z" fill="#ffffff"/>
  <path d="M147 96 L152 107 L145 112 L141 104 Z" fill="#fbfaf7"/>
  <!-- tie -->
  <path d="M134.6 112 L141.6 105.6 L148.6 112 L145.6 118 L157 146 L143.6 146 L138.4 120 Z" fill="#a7a59a"/>
  <path d="M138 112 L144 118 M140 124 L147 128 M142 132 L151 136 M137 116 L143 110 M145 139 L154 142" stroke="#dad8cd" stroke-width="1.4"/>
  <!-- suit -->
  <path d="M48.6 146 C51 136 54 131 56.8 129 C62 124 68 121 75.2 118 L100 101 L103.8 90.3 L137.5 146 Z" fill="#14131a"/>
  <path d="M150.8 105.7 C158 110 162 113 165 117 C169 121 171.6 125 173.3 129 L177 146 L158 146 L149 120 Z" fill="#14131a"/>
  <path d="M103.8 90.3 L99.6 104 L127 146 L137.5 146 Z" fill="#0b0b0f"/>
 </g>
 </g>
</svg>
 <div class="nm">陈鸣峰</div>
 <div class="ft">Prepared by Katrina Lau 2024</div>
 <div class="pg">8</div>
</div></div>
 <div id="rscroll" class="abs"><div class="sbtn" style="left:1px;top:6px;width:10px;height:11px"></div><div class="abs" style="left:1px;top:114.5px;width:10.5px;height:15px;background:#fff;border:1px solid #cfcfcf"></div><div class="sbtn d" style="left:1px;top:579px;width:10px;height:10px"></div>
  <svg class="abs" style="left:1px;top:592px;width:10px;height:24px" viewBox="0 0 10 24"><path d="M2.6 6 L5 3.6 L7.4 6 Z M2.6 9 L5 6.6 L7.4 9 Z M2.6 14.6 L5 17 L7.4 14.6 Z M2.6 17.6 L5 20 L7.4 17.6 Z" fill="#555"/></svg>
 </div>
 <div id="status" class="abs">
  <span style="left:7px">SLIDE 8 OF 40</span><svg class="abs" style="left:67px;top:3px;width:11px;height:10px" viewBox="0 0 11 10"><path d="M1 1.4 H6.4 V8.6 H1 Z" fill="none" stroke="#ffd9c8" stroke-width="0.9"/><path d="M4.4 5.6 L6 7.4 L9.6 1.6" fill="none" stroke="#ffe9df" stroke-width="1"/></svg><span style="left:90px">ENGLISH (UNITED STATES)</span>
  <span style="left:535px">NOTES</span><span style="left:585px">COMMENTS</span><span style="left:844px">107%</span>
  <svg class="abs" style="left:520px;top:0;width:366px;height:15px;overflow:visible" viewBox="0 0 366 15">
   <path d="M4 10.6 h8 M5 8.6 h6 M6.4 6.6 h3.2" stroke="#ffd9c8" stroke-width="1.1"/>
   <path d="M53 3.6 h9 v6 h-4 l-2 2.2 v-2.2 h-3 z" fill="#ffe4d8"/>
   <rect x="129.5" y="3.5" width="8" height="8" fill="none" stroke="#ffe4d8" stroke-width="1.1"/><rect x="132.4" y="5.2" width="3.6" height="2.8" fill="#ffe4d8"/>
   <path d="M155 3 h4 v4 h-4 z M160.4 3 h4 v4 h-4 z M155 8.4 h4 v4 h-4 z M160.4 8.4 h4 v4 h-4 z" fill="#ffe4d8"/>
   <path d="M181 3.6 h4 v8 h-4 z M186.4 3.6 h4 v8 h-4 z" fill="none" stroke="#ffe4d8" stroke-width="1"/>
   <path d="M207 3.6 h10 M208.2 3.6 v5.6 h7.6 v-5.6 M212 9.2 v3 M209.6 12.4 h4.8" fill="none" stroke="#ffe4d8" stroke-width="1"/>
   <path d="M230 7.6 h4" stroke="#ffe4d8" stroke-width="1.2"/><path d="M238 7.6 h69" stroke="#ffd0bc" stroke-width="0.8"/><rect x="271.6" y="3.6" width="2.6" height="8" fill="#ffe4d8"/><path d="M308.6 7.6 h5 M311.1 5.1 v5" stroke="#ffe4d8" stroke-width="1.3"/>
   <path d="M353.4 3.4 h8.4 v8.4 h-8.4 z" fill="none" stroke="#ffe4d8" stroke-width="1.1"/><path d="M355 5 l2 2 M360.2 5 l-2 2 M355 10.2 l2 -2 M360.2 10.2 l-2 -2" stroke="#ffe4d8" stroke-width="1"/>
  </svg>
 </div>
</div>


<!-- mouse cursor -->
<svg class="abs" style="left:834px;top:511px;width:18px;height:24px;overflow:visible" viewBox="0 0 18 24"><path d="M2.4 7.5 H14.2 M8.2 2 V13" stroke="#2a2c34" stroke-width="1.1" fill="none"/><path d="M8.2 0.8 L9.8 3 H6.6 Z M1 7.5 L3.4 6 V9 Z M15.6 7.5 L13.2 6 V9 Z" fill="#2a2c34"/><path d="M8.4 7.8 L8.4 17.4 L10.6 15.4 L12.6 19.8 L14.4 19 L12.4 14.8 L15.4 14.6 Z" fill="#fff" stroke="#2a2c34" stroke-width="0.9" stroke-linejoin="round"/></svg>
<!-- right participant panel -->
<div id="vtile" class="abs"><div class="in"></div>
 <svg viewBox="0 0 222 300" preserveAspectRatio="none">
  <defs>
   <filter id="vb" x="-5%" y="-5%" width="110%" height="110%"><feGaussianBlur stdDeviation="1.6"/></filter>
   <filter id="vb2" x="-5%" y="-5%" width="110%" height="110%"><feGaussianBlur stdDeviation="4"/></filter>
   <linearGradient id="wall" x1="0" y1="0" x2="0" y2="1"><stop offset="0" stop-color="#c9cdc9"/><stop offset="0.5" stop-color="#c6cac7"/><stop offset="1" stop-color="#b9bab3"/></linearGradient>
   <linearGradient id="up" x1="0" y1="0" x2="0" y2="1"><stop offset="0" stop-color="#8a651f"/><stop offset="0.22" stop-color="#6d4c18"/><stop offset="0.45" stop-color="#8e6e44"/><stop offset="0.62" stop-color="#b3a596"/><stop offset="0.8" stop-color="#c6c5bd"/><stop offset="1" stop-color="#cfd0ca"/></linearGradient>
   <clipPath id="vc"><rect width="222" height="300"/></clipPath>
  </defs>
  <g clip-path="url(#vc)">
   <rect width="222" height="300" fill="url(#wall)"/>
   <g filter="url(#vb2)"><path d="M-10 -10 H232 V70 L-10 92 Z" fill="url(#up)"/></g>
   <g filter="url(#vb)">
    <path d="M-4 -6 H170 L-4 14 Z" fill="#8b6a22"/>
    <path d="M-4 15 L168 0 L170 2.4 L-4 18.2 Z" fill="#e9dcc2"/>
    <path d="M-4 18 L230 -2 V24 L-4 50 Z" fill="#6e4d19" opacity="0.85"/>
    <path d="M-4 78 L230 56 V72 L-4 92 Z" fill="#8d6a1d"/>
    <path d="M-4 77 L230 55 V58 L-4 80 Z" fill="#a18a52"/>
    <path d="M-4 92 L230 72 V96 L-4 114 Z" fill="#dfe0df"/>
    <path d="M-4 92 L230 72 V75 L-4 95 Z" fill="#f0ece0"/>
    <path d="M-4 114 L230 95 V108 L-4 126 Z" fill="#7c5a2a"/>
    <path d="M-4 113 L230 94 V98 L-4 117 Z" fill="#9a7a44"/>
    <path d="M-4 125 L230 107 V111 L-4 129 Z" fill="#a99a80"/>
   </g>
  </g>
 </svg>
 <div class="nlabel" style="left:8px;top:279px;width:100px;font-size:11.3px">Katrina Lau (来宾)</div>
</div>
<div class="av abs" style="left:1061px;top:435px;background:#d4e6de;color:#3f5c4e">陈</div>
<div class="av abs" style="left:1167px;top:435px;background:#e3e7db;color:#5b6649">蔡</div>
<div class="av abs" style="left:1061px;top:540px;background:#d6e0e8;color:#3c4f5d">劳</div>
<div class="av abs" style="left:1167px;top:540px;background:#262626;border:1px solid #5c5c5c"><svg class="abs" style="left:22px;top:30px;width:22px;height:6px" viewBox="0 0 22 6"><circle cx="3" cy="3" r="1.7" fill="#f4f4f4"/><circle cx="11" cy="3" r="1.7" fill="#f4f4f4"/><circle cx="19" cy="3" r="1.7" fill="#f4f4f4"/></svg></div>
<div class="pl" style="left:1050px;top:511px">陈润希 (来...</div><svg class="pm" style="left:1125px;top:510px" viewBox="0 0 14 14"><rect x="4.9" y="1.2" width="4.2" height="7" rx="2.1" fill="#d8d8d8"/><path d="M3 6.6 C3 11.4 11 11.4 11 6.6 M7 10.4 V12.6" stroke="#d8d8d8" stroke-width="1" fill="none" stroke-linecap="round"/><path d="M1.4 1 L12.6 13" stroke="#1f1f1f" stroke-width="2.6"/><path d="M1.4 1 L12.6 13" stroke="#d8d8d8" stroke-width="1" stroke-linecap="round"/></svg>
<div class="pl" style="left:1155px;top:511px">蔡梓莹 (来...</div><svg class="pm" style="left:1230px;top:510px" viewBox="0 0 14 14"><rect x="4.9" y="1.2" width="4.2" height="7" rx="2.1" fill="#d8d8d8"/><path d="M3 6.6 C3 11.4 11 11.4 11 6.6 M7 10.4 V12.6" stroke="#d8d8d8" stroke-width="1" fill="none" stroke-linecap="round"/><path d="M1.4 1 L12.6 13" stroke="#1f1f1f" stroke-width="2.6"/><path d="M1.4 1 L12.6 13" stroke="#d8d8d8" stroke-width="1" stroke-linecap="round"/></svg>
<div class="pl" style="left:1050px;top:616px">劳津苗 (来...</div><svg class="pm" style="left:1125px;top:616px" viewBox="0 0 14 14"><rect x="4.9" y="1.2" width="4.2" height="7" rx="2.1" fill="#d8d8d8"/><path d="M3 6.6 C3 11.4 11 11.4 11 6.6 M7 10.4 V12.6" stroke="#d8d8d8" stroke-width="1" fill="none" stroke-linecap="round"/><path d="M1.4 1 L12.6 13" stroke="#1f1f1f" stroke-width="2.6"/><path d="M1.4 1 L12.6 13" stroke="#d8d8d8" stroke-width="1" stroke-linecap="round"/></svg>
<div class="pl" style="left:1160px;top:616px">查看所有参与者</div>
<div id="btile" class="abs"><div class="av" style="left:89px;top:38px;width:54px;height:54px;line-height:53px;font-size:22px;background:#e2e6dc;color:#4d5a48">陈</div></div>
<div id="navy" class="abs"></div>

<!-- bottom-left overlays -->
<div class="nlabel" style="left:12px;top:757px;width:101px;height:23px;line-height:26px;text-align:left;padding-left:6px;font-size:11.4px;background:rgba(0,0,0,.5)">Katrina Lau (来宾)</div>
<div class="nlabel" style="left:121px;top:757px;width:63.5px;height:23px;background:rgba(0,0,0,.5)"><svg class="abs" style="left:41px;top:6.5px;width:11px;height:11px" viewBox="0 0 11 11"><path d="M5.5 0.5 V10.5 M0.5 5.5 H10.5" stroke="#eee" stroke-width="1.1"/></svg></div>
<div class="abs" style="left:62px;top:792px;width:1124px;height:1px;background:#c8c8c8"></div>
<div class="abs" style="left:1186px;top:792px;width:70px;height:1px;background:#555"></div>
</body>
</html>
